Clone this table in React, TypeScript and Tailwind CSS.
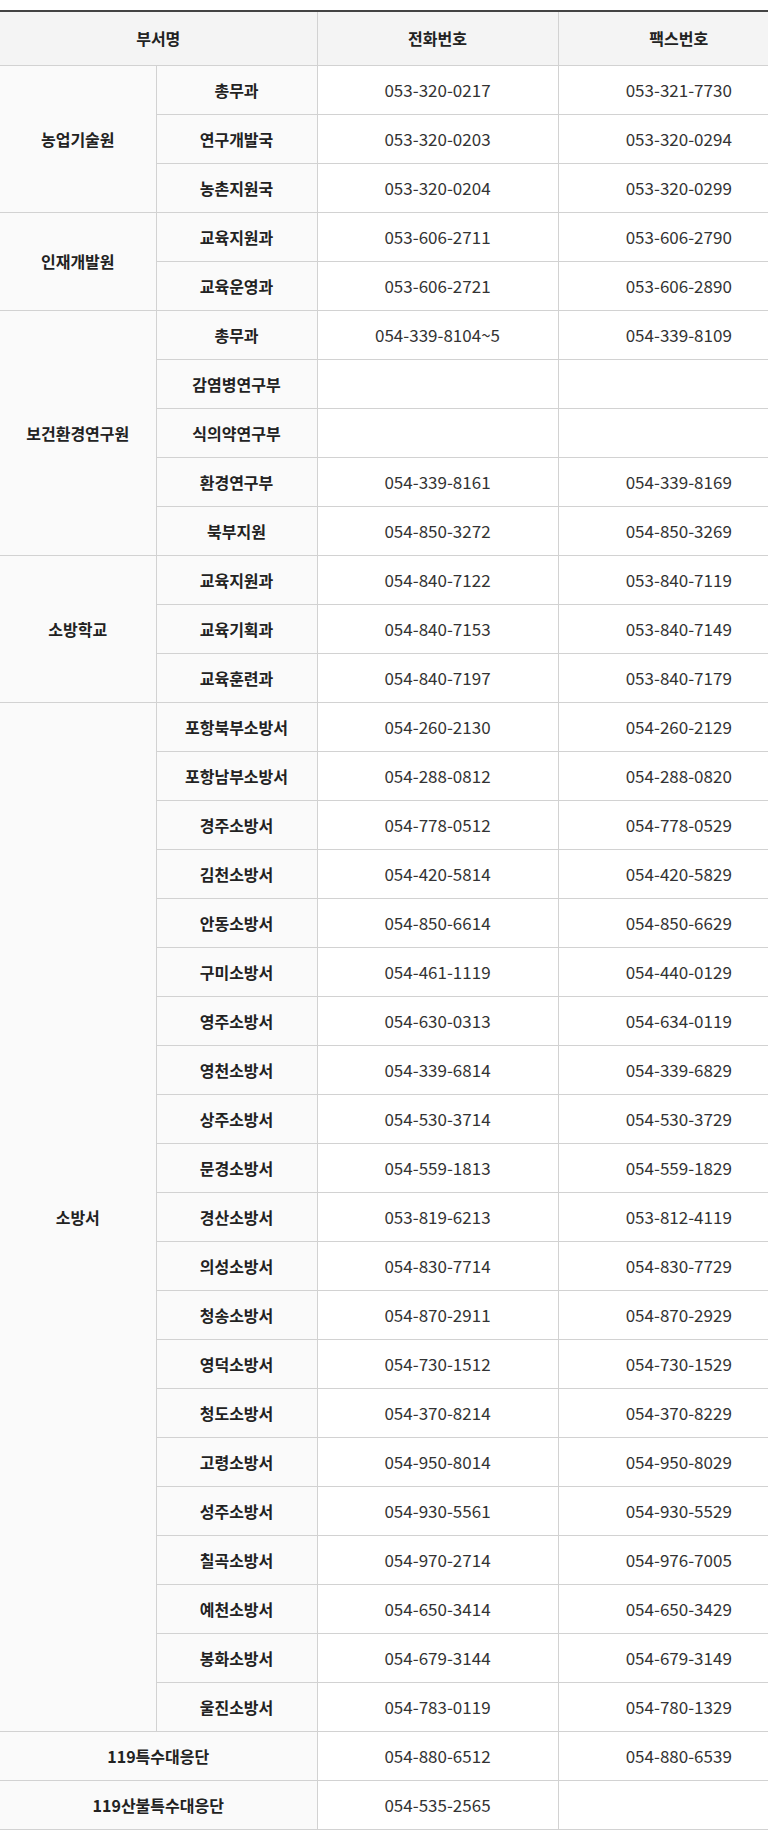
import React from 'react';

type Sub = { name: string; tel: string; fax: string };
type Group = { name: string; subs: Sub[] };

const groups: Group[] = [
  {
    name: '농업기술원',
    subs: [
      { name: '총무과', tel: '053-320-0217', fax: '053-321-7730' },
      { name: '연구개발국', tel: '053-320-0203', fax: '053-320-0294' },
      { name: '농촌지원국', tel: '053-320-0204', fax: '053-320-0299' },
    ],
  },
  {
    name: '인재개발원',
    subs: [
      { name: '교육지원과', tel: '053-606-2711', fax: '053-606-2790' },
      { name: '교육운영과', tel: '053-606-2721', fax: '053-606-2890' },
    ],
  },
  {
    name: '보건환경연구원',
    subs: [
      { name: '총무과', tel: '054-339-8104~5', fax: '054-339-8109' },
      { name: '감염병연구부', tel: '', fax: '' },
      { name: '식의약연구부', tel: '', fax: '' },
      { name: '환경연구부', tel: '054-339-8161', fax: '054-339-8169' },
      { name: '북부지원', tel: '054-850-3272', fax: '054-850-3269' },
    ],
  },
  {
    name: '소방학교',
    subs: [
      { name: '교육지원과', tel: '054-840-7122', fax: '053-840-7119' },
      { name: '교육기획과', tel: '054-840-7153', fax: '053-840-7149' },
      { name: '교육훈련과', tel: '054-840-7197', fax: '053-840-7179' },
    ],
  },
  {
    name: '소방서',
    subs: [
      { name: '포항북부소방서', tel: '054-260-2130', fax: '054-260-2129' },
      { name: '포항남부소방서', tel: '054-288-0812', fax: '054-288-0820' },
      { name: '경주소방서', tel: '054-778-0512', fax: '054-778-0529' },
      { name: '김천소방서', tel: '054-420-5814', fax: '054-420-5829' },
      { name: '안동소방서', tel: '054-850-6614', fax: '054-850-6629' },
      { name: '구미소방서', tel: '054-461-1119', fax: '054-440-0129' },
      { name: '영주소방서', tel: '054-630-0313', fax: '054-634-0119' },
      { name: '영천소방서', tel: '054-339-6814', fax: '054-339-6829' },
      { name: '상주소방서', tel: '054-530-3714', fax: '054-530-3729' },
      { name: '문경소방서', tel: '054-559-1813', fax: '054-559-1829' },
      { name: '경산소방서', tel: '053-819-6213', fax: '053-812-4119' },
      { name: '의성소방서', tel: '054-830-7714', fax: '054-830-7729' },
      { name: '청송소방서', tel: '054-870-2911', fax: '054-870-2929' },
      { name: '영덕소방서', tel: '054-730-1512', fax: '054-730-1529' },
      { name: '청도소방서', tel: '054-370-8214', fax: '054-370-8229' },
      { name: '고령소방서', tel: '054-950-8014', fax: '054-950-8029' },
      { name: '성주소방서', tel: '054-930-5561', fax: '054-930-5529' },
      { name: '칠곡소방서', tel: '054-970-2714', fax: '054-976-7005' },
      { name: '예천소방서', tel: '054-650-3414', fax: '054-650-3429' },
      { name: '봉화소방서', tel: '054-679-3144', fax: '054-679-3149' },
      { name: '울진소방서', tel: '054-783-0119', fax: '054-780-1329' },
    ],
  },
];

const singles: Sub[] = [
  { name: '119특수대응단', tel: '054-880-6512', fax: '054-880-6539' },
  { name: '119산불특수대응단', tel: '054-535-2565', fax: '' },
];

const th = 'h-[49px] border border-[#d2d2d2] bg-[#fafafa] font-bold text-[16px] text-[#222] text-center';
const td = 'h-[49px] border border-[#d2d2d2] bg-white text-[17px] text-[#333] text-center';
const head = 'h-[54px] border border-[#d2d2d2] border-t-0 bg-[#f4f4f4] font-bold text-[16px] text-[#222]';

export default function App() {
  return (
    <div
      className="bg-white pt-[10px] overflow-hidden"
      style={{ fontFamily: '"Noto Sans CJK KR", "Noto Sans", sans-serif' }}
    >
      <table className="w-[799px] border-collapse table-fixed border-t-2 border-t-[#444]">
        <colgroup>
          <col className="w-[156px]" />
          <col className="w-[161px]" />
          <col className="w-[241px]" />
          <col className="w-[241px]" />
        </colgroup>
        <thead>
          <tr>
            <th colSpan={2} className={head + ' border-l-0'}>
              부서명
            </th>
            <th className={head}>전화번호</th>
            <th className={head + ' border-r-0'}>팩스번호</th>
          </tr>
        </thead>
        <tbody>
          {groups.map((g) =>
            g.subs.map((s, i) => (
              <tr key={g.name + s.name}>
                {i === 0 && (
                  <th rowSpan={g.subs.length} className={th + ' border-l-0'}>
                    {g.name}
                  </th>
                )}
                <th className={th}>{s.name}</th>
                <td className={td}>{s.tel}</td>
                <td className={td + ' border-r-0'}>{s.fax}</td>
              </tr>
            ))
          )}
          {singles.map((s) => (
            <tr key={s.name}>
              <th colSpan={2} className={th + ' border-l-0'}>
                {s.name}
              </th>
              <td className={td}>{s.tel}</td>
              <td className={td + ' border-r-0'}>{s.fax}</td>
            </tr>
          ))}
        </tbody>
      </table>
    </div>
  );
}
